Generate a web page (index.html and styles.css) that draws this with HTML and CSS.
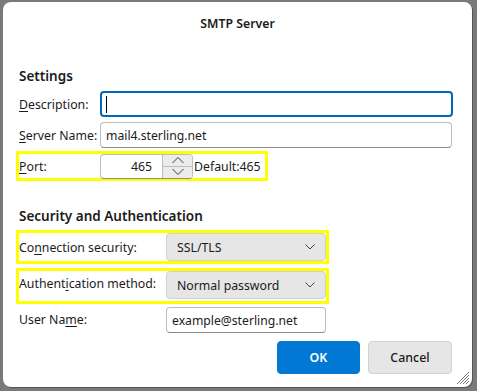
FILE: index.html
```html
<!DOCTYPE html>
<html>
<head>
<meta charset="utf-8">
<link rel="stylesheet" href="styles.css">
</head>
<body>
<div class="dialog">
  <div class="title">SMTP Server</div>
  <div class="content">
    <div class="heading h1">Settings</div>
    <div class="row r-desc">
      <label class="lbl"><u>D</u>escription:</label>
      <div class="input wide focus"><span class="caret"></span></div>
    </div>
    <div class="row r-server">
      <label class="lbl"><u>S</u>erver Name:</label>
      <div class="input wide srv">mail4.sterling.net</div>
    </div>
    <div class="hl hl-port">
      <label class="lbl"><u>P</u>ort:</label>
      <div class="spin">
        <div class="spin-val">465</div>
        <div class="spin-btns">
          <div class="sb"><svg width="14" height="8" viewBox="0 0 14 8"><path d="M1.5 7 L7 1.5 L12.5 7" fill="none" stroke="#3a3a3a" stroke-width="1"/></svg></div>
          <div class="sb"><svg width="14" height="8" viewBox="0 0 14 8"><path d="M1.5 1 L7 6.5 L12.5 1" fill="none" stroke="#3a3a3a" stroke-width="1"/></svg></div>
        </div>
      </div>
      <span class="deflt">Default:465</span>
    </div>
    <div class="heading h2">Security and Authentication</div>
    <div class="hl hl-sel hl-conn">
      <label class="lbl lbl2">Co<u>n</u>nection security:</label>
      <div class="select"><span>SSL/TLS</span><svg width="10" height="6" viewBox="0 0 10 6"><path d="M0.5 0.5 L5 5 L9.5 0.5" fill="none" stroke="#444" stroke-width="1"/></svg></div>
    </div>
    <div class="hl hl-sel hl-auth">
      <label class="lbl lbl2">Authent<u>i</u>cation method:</label>
      <div class="select sel-big"><span>Normal password</span><svg width="10" height="6" viewBox="0 0 10 6"><path d="M0.5 0.5 L5 5 L9.5 0.5" fill="none" stroke="#444" stroke-width="1"/></svg></div>
    </div>
    <div class="row r-user">
      <label class="lbl lbl2 lbl-user">User Na<u>m</u>e:</label>
      <div class="input user">example@sterling.net</div>
    </div>
    <div class="buttons">
      <button class="btn ok">OK</button>
      <button class="btn cancel">Cancel</button>
    </div>
  </div>
  <svg class="grip" width="14" height="14" viewBox="0 0 14 14">
    <path d="M13 1 L1 13 M13 4 L4 13 M13 7 L7 13 M13 10 L10 13" stroke="#777" stroke-width="1" fill="none"/>
  </svg>
</div>
</body>
</html>
```

FILE: styles.css
```css
html, body {
  margin: 0;
  padding: 0;
  background: #7a7a7a;
  width: 477px;
  height: 391px;
  overflow: hidden;
}
body {
  font-family: "Noto Sans", "Open Sans", sans-serif;
  color: #1b1b1b;
  font-size: 12.3px;
}
.dialog {
  position: relative;
  box-sizing: border-box;
  margin: 2px 0 0 3px;
  width: 469px;
  height: 385px;
  background: #fff;
  border-radius: 8px;
  box-shadow: 1px 1px 0 #555;
}
.title {
  padding-top: 13px;
  height: 18px;
  line-height: 18px;
  text-align: center;
  font-weight: 600;
  font-size: 12.3px;
}
.content {
  padding-left: 16px;
}
.heading {
  height: 20px;
  line-height: 20px;
  font-size: 13.5px;
  font-weight: 600;
}
.h1 { margin-top: 33px; }
.h2 { margin-top: 25px; }
.row {
  display: flex;
  align-items: center;
}
.lbl {
  width: 81px;
  flex: none;
  white-space: nowrap;
}
.lbl u { text-underline-offset: 2px; }
.lbl2 { width: 147px; }
.r-desc { margin-top: 5px; }
.r-server { margin-top: 5px; }
.input {
  box-sizing: border-box;
  height: 26px;
  border: 1px solid #bdbdbd;
  border-bottom-color: #8a8a8a;
  border-radius: 4px;
  display: flex;
  align-items: center;
  padding-left: 5px;
  font-size: 12.2px;
}
.wide { width: 353px; }
.srv { width: 352px; }
.focus {
  border: 2px solid #0067c0;
  padding-left: 4px;
}
.caret {
  display: block;
  width: 1px;
  height: 17px;
  background: #000;
}
.hl {
  box-sizing: border-box;
  display: flex;
  align-items: center;
  border: 3px solid #ffff00;
  margin-left: -3px;
}
.hl-port {
  margin-top: 3px;
  width: 252px;
  height: 30px;
}
.spin {
  box-sizing: border-box;
  width: 93px;
  height: 25px;
  border: 1px solid #bdbdbd;
  border-bottom-color: #8a8a8a;
  border-radius: 4px;
  display: flex;
  overflow: hidden;
}
.spin-val {
  flex: 1;
  text-align: right;
  padding-right: 10px;
  line-height: 23px;
  font-size: 12.3px;
}
.spin-btns {
  width: 29px;
  display: flex;
  flex-direction: column;
  border-left: 1px solid #bdbdbd;
}
.sb {
  flex: 1;
  background: #ececec;
  display: flex;
  align-items: center;
  justify-content: center;
}
.sb + .sb { border-top: 1px solid #bdbdbd; }
.deflt {
  margin-left: 1px;
}
.hl-sel {
  width: 313px;
}
.hl-conn {
  margin-top: 4px;
  height: 34px;
}
.hl-auth {
  margin-top: 4px;
  height: 36px;
  align-items: flex-start;
}
.hl-auth .lbl { margin-top: 4px; }
.select {
  box-sizing: border-box;
  width: 160px;
  height: 28px;
  background: #e6e6e6;
  border: 1px solid #d0d0d0;
  border-radius: 4px;
  display: flex;
  align-items: center;
  justify-content: space-between;
  padding: 0 10px 0 10px;
  font-size: 12.3px;
}
.r-user { margin-top: 3px; }
.lbl-user { margin-top: -1px; }
.user { width: 160px; }
.buttons {
  margin-top: 8px;
  display: flex;
  justify-content: flex-end;
  gap: 8px;
  padding-right: 20px;
}
.btn {
  box-sizing: border-box;
  height: 33px;
  border-radius: 4px;
  font-family: "Noto Sans", sans-serif;
  font-size: 12.4px;
  padding: 0;
}
.ok {
  width: 83px;
  background: #0078d4;
  border: 1px solid #0078d4;
  color: #fff;
  font-weight: 600;
}
.cancel {
  width: 84px;
  background: #e6e6e6;
  border: 1px solid #d2d2d2;
  color: #1b1b1b;
  font-weight: 500;
}
.grip {
  position: absolute;
  right: 2px;
  bottom: 2px;
}
```
